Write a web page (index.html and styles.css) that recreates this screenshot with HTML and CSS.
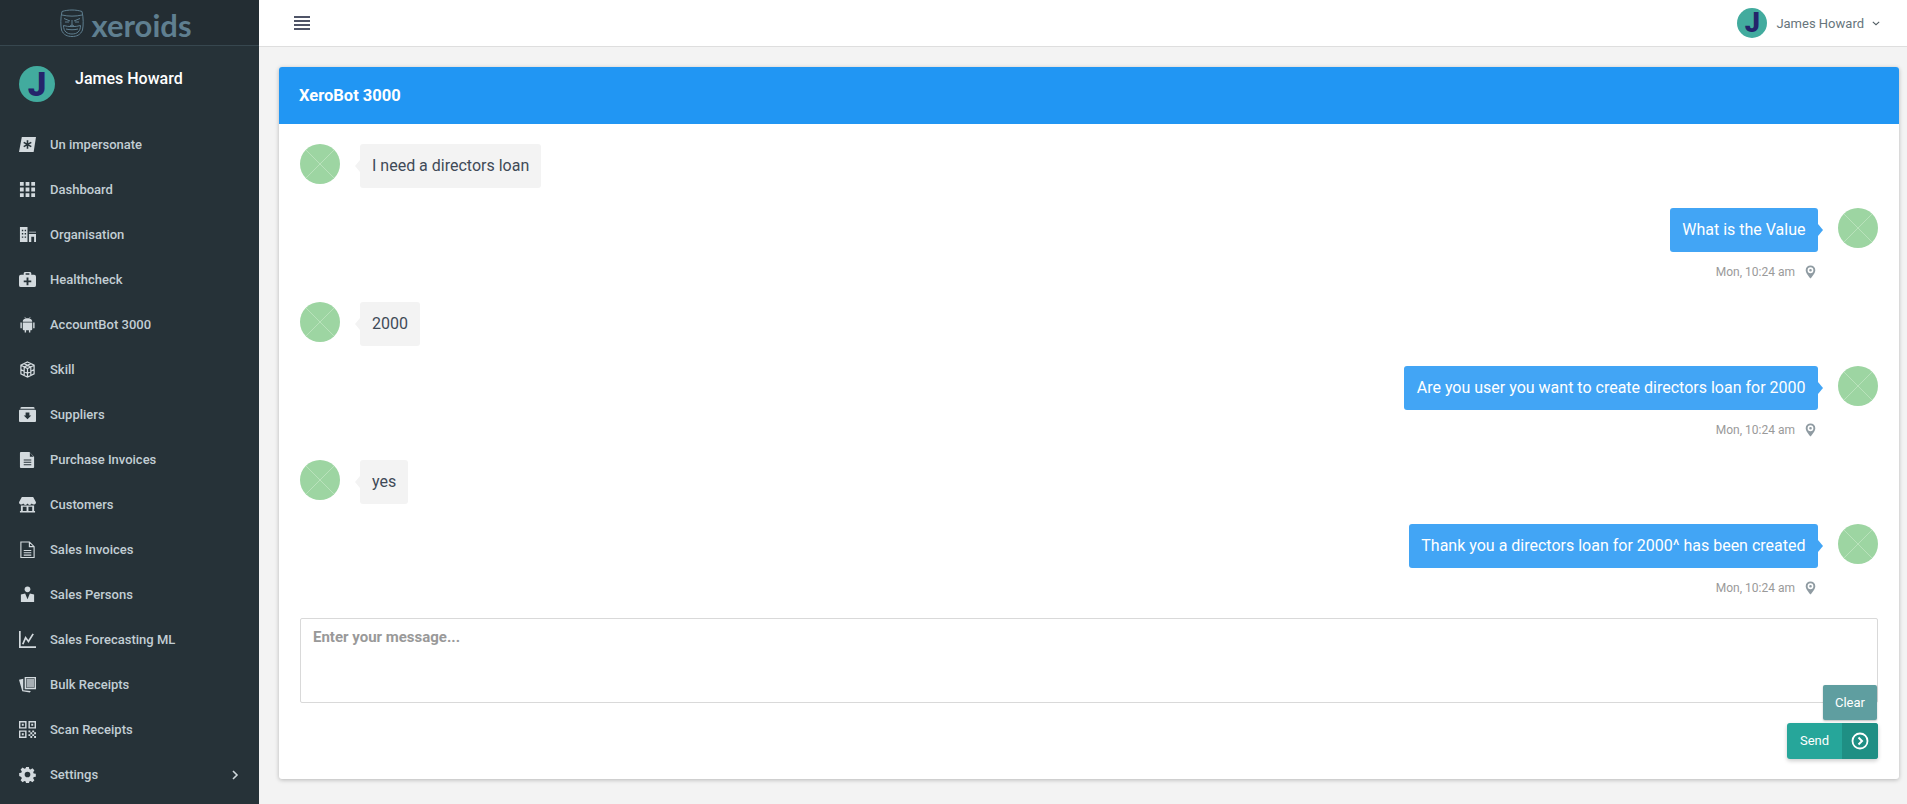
FILE: index.html
```html
<!DOCTYPE html>
<html lang="en">
<head>
<meta charset="utf-8">
<title>XeroBot 3000</title>
<link rel="stylesheet" href="styles.css">
</head>
<body>
<div class="app">
  <aside class="sidebar">
    <div class="brand">
      <svg class="brand-mask" viewBox="0 0 24 28" fill="none" stroke="#5f7f90" stroke-width="1">
        <path d="M2 2.500c6-2 14-2 20 0 1.500 6 1.500 14 .5 18.500-2 5-6 6.500-10.500 6.500S3.500 26 1.500 21C.5 16.500.5 8.500 2 2.500z"/>
        <path d="M2 6c6 1.500 14 1.500 20 0M4 9.500l6 2.500M20 9.500l-6 2.500M5 13h4M15 13h4M12 11v5l-2 1M12 16l2 1M3.500 16.500c5 1.500 12 1.500 17 0 0 6-3.500 8.500-8.500 8.500s-8.500-2.500-8.500-8.500zM6 20c4 1 8 1 12 0"/>
      </svg>
      <span class="brand-name">xeroids</span>
    </div>
    <div class="profile">
      <div class="avatar-j big"><span>J</span></div>
      <div class="profile-name">James Howard</div>
    </div>
    <nav class="menu">
      <a class="item"><svg class="ic" viewBox="0 0 18 18"><path d="M3 1h15l-2.500 16H0z"/><path d="M9 4.500v9M5 6.700l8 4.600M13 6.700l-8 4.600" stroke="#263238" stroke-width="1.700" fill="none"/></svg><span>Un impersonate</span></a>
      <a class="item"><svg class="ic" viewBox="0 0 18 18"><path d="M1 1h4v4H1zM7 1h4v4H7zM13 1h4v4h-4zM1 7h4v4H1zM7 7h4v4H7zM13 7h4v4h-4zM1 13h4v4H1zM7 13h4v4H7zM13 13h4v4h-4z"/></svg><span>Dashboard</span></a>
      <a class="item"><svg class="ic" viewBox="0 0 18 18"><path fill-rule="evenodd" d="M1 1h8v16H1zM3 4v1.500h1.500V4zM6 4v1.500h1.500V4zM3 7.500V9h1.500V7.500zM6 7.500V9h1.500V7.500zM3 11v1.500h1.500V11zM6 11v1.500h1.500V11z"/><path fill-rule="evenodd" d="M10.500 6H18v1h-7.500zM10.500 8.500H18V17h-2v-5.500h-3V17h-2.500z"/></svg><span>Organisation</span></a>
      <a class="item"><svg class="ic" viewBox="0 0 18 18"><path fill-rule="evenodd" d="M6 1h6l1 1v2h3a2 2 0 0 1 2 2v9a2 2 0 0 1-2 2H2a2 2 0 0 1-2-2V6a2 2 0 0 1 2-2h3V2zM7 2.500V4h4V2.500zM8 7v3H5v2h3v3h2v-3h3v-2h-3V7z"/></svg><span>Healthcheck</span></a>
      <a class="item"><svg class="ic" viewBox="0 0 18 18"><path d="M4 7h10v7a1 1 0 0 1-1 1h-1v2.500h-1.500V15h-3v2.500H6V15H5a1 1 0 0 1-1-1zM1.500 7H3v6H1.500zM15 7h1.500v6H15zM4 6.200C4 3.500 6.500 2.500 9 2.500s5 1 5 3.700z"/><path d="M6 1l1.500 2M12 1l-1.500 2" stroke="#cfd8dc" stroke-width=".7"/></svg><span>AccountBot 3000</span></a>
      <a class="item"><svg class="ic line heavy" viewBox="0 0 18 18"><path d="M9 1l7 3.500v9L9 17l-7-3.500v-9zM2 4.500L9 8l7-3.500M9 8v9M5.500 2.800l7 3.500M12.500 2.800l-7 3.500M2 9l7 4 7-4M5.500 6.300v9M12.500 6.300v9"/></svg><span>Skill</span></a>
      <a class="item"><svg class="ic" viewBox="0 0 18 18"><path fill-rule="evenodd" d="M3 1h12a1.500 1.500 0 0 1 1.500 1.500V3H1.500v-.5A1.500 1.500 0 0 1 3 1zM1 4h16a1 1 0 0 1 1 1v11a1 1 0 0 1-1 1H1a1 1 0 0 1-1-1V5a1 1 0 0 1 1-1zM7 7v3H5l4 4 4-4h-2V7z"/></svg><span>Suppliers</span></a>
      <a class="item"><svg class="ic" viewBox="0 0 18 18"><path fill-rule="evenodd" d="M2 1h9l5 5v11a1 1 0 0 1-1 1H2a1 1 0 0 1-1-1V2a1 1 0 0 1 1-1zM11.500 1.800V6h4zM5 9v1h8V9zM5 11.500v1h8v-1zM5 14v1h8v-1z"/></svg><span>Purchase Invoices</span></a>
      <a class="item"><svg class="ic" viewBox="0 0 18 18"><path d="M3 1h12l3 5.500A2.500 2.500 0 0 1 13.500 8 2.500 2.500 0 0 1 9 8a2.500 2.500 0 0 1-4.500 0A2.500 2.500 0 0 1 0 6.500z"/><path fill-rule="evenodd" d="M2 10h14v6h1v1.500H1V16h1zM4 11.500V16h4v-4.500zM10 11.500V16h4v-4.500z" /></svg><span>Customers</span></a>
      <a class="item"><svg class="ic line" viewBox="0 0 18 18"><path d="M2 1h9l5 5v11.500H2zM11 1v5h5M5 10h8M5 12.500h8M5 15h8"/></svg><span>Sales Invoices</span></a>
      <a class="item"><svg class="ic" viewBox="0 0 18 18"><circle cx="9" cy="3.500" r="3"/><path d="M6.500 8L9 14l2.500-6 4.500 1v8H2V9z"/></svg><span>Sales Persons</span></a>
      <a class="item"><svg class="ic line" viewBox="0 0 18 18"><path d="M.9 0v17.100H18M4 14l3-7 3 4 5-8" stroke-width="1.800"/></svg><span>Sales Forecasting ML</span></a>
      <a class="item"><svg class="ic" viewBox="0 0 18 18"><path fill-rule="evenodd" d="M6 1h12v13H6zM7.500 2.500v10h9v-10z"/><path d="M8 3h8v9H8z" opacity=".75"/><path d="M4.500 3v12l8 1-1 1.500-8-1.300L0 4z"/></svg><span>Bulk Receipts</span></a>
      <a class="item"><svg class="ic" viewBox="0 0 18 18"><path fill-rule="evenodd" d="M0 0h8v8H0zM1.500 1.500v5h5v-5zM10 0h8v8h-8zM11.500 1.500v5h5v-5zM0 10h8v8H0zM1.500 11.500v5h5v-5zM3 3h2v2H3zM13 3h2v2h-2zM3 13h2v2H3z"/><path d="M10 10h2v2h-2zM14 10h2v2h-2zM12 12h2v2h-2zM16 12h2v2h-2zM10 14h2v2h-2zM14 14h2v2h-2zM12 16h2v2h-2zM16 16h2v2h-2z"/></svg><span>Scan Receipts</span></a>
      <a class="item has-sub"><svg class="ic" viewBox="0 0 18 18"><path fill-rule="evenodd" d="M7.500 1h3l.4 2.200 1.400.6 1.900-1.300 2.100 2.100-1.300 1.900.6 1.400 2.200.4v3l-2.200.4-.6 1.400 1.300 1.900-2.100 2.100-1.900-1.300-1.400.6-.4 2.200h-3l-.4-2.200-1.400-.6-1.900 1.300-2.100-2.100 1.300-1.900-.6-1.400L.2 10.500v-3l2.200-.4.600-1.400-1.300-1.900 2.100-2.100 1.900 1.300 1.400-.6zM9 6a3 3 0 1 0 0 6 3 3 0 0 0 0-6z"/></svg><span>Settings</span><svg class="chev" viewBox="0 0 8 12"><path d="M2 2l4 4-4 4" fill="none" stroke="#cfd8dc" stroke-width="1.600"/></svg></a>
    </nav>
  </aside>
  <div class="main">
    <header class="topbar">
      <div class="burger"><i></i><i></i><i></i><i></i></div>
      <div class="user">
        <div class="avatar-j small"><span>J</span></div>
        <span class="user-name">James Howard</span>
        <svg class="user-chev" viewBox="0 0 10 6"><path d="M1 1l4 3.500L9 1" fill="none" stroke="#4f5b62" stroke-width="1.300"/></svg>
      </div>
    </header>
    <main class="content">
      <section class="card">
        <h1 class="card-head">XeroBot 3000</h1>
        <div class="card-body">
          <div class="msg left"><div class="thumb"></div><div class="bubble">I need a directors loan</div></div>
          <div class="msg right"><div class="col"><div class="bubble">What is the Value</div><div class="meta">Mon, 10:24 am<svg class="pin" viewBox="0 0 12 16"><path fill-rule="evenodd" d="M6 .5a5.500 5.500 0 0 1 5.500 5.500C11.500 9.700 6 15.500 6 15.500S.5 9.700.5 6A5.500 5.500 0 0 1 6 .5zm0 2.200a3.300 3.300 0 1 0 0 6.600 3.300 3.300 0 0 0 0-6.600zM6 4.500A1.500 1.500 0 1 1 6 7.500 1.500 1.500 0 0 1 6 4.500z"/></svg></div></div><div class="thumb"></div></div>
          <div class="msg left"><div class="thumb"></div><div class="bubble">2000</div></div>
          <div class="msg right"><div class="col"><div class="bubble">Are you user you want to create directors loan for 2000</div><div class="meta">Mon, 10:24 am<svg class="pin" viewBox="0 0 12 16"><path fill-rule="evenodd" d="M6 .5a5.500 5.500 0 0 1 5.500 5.500C11.500 9.700 6 15.500 6 15.500S.5 9.700.5 6A5.500 5.500 0 0 1 6 .5zm0 2.200a3.300 3.300 0 1 0 0 6.600 3.300 3.300 0 0 0 0-6.600zM6 4.500A1.500 1.500 0 1 1 6 7.500 1.500 1.500 0 0 1 6 4.500z"/></svg></div></div><div class="thumb"></div></div>
          <div class="msg left"><div class="thumb"></div><div class="bubble">yes</div></div>
          <div class="msg right"><div class="col"><div class="bubble">Thank you a directors loan for 2000^ has been created</div><div class="meta">Mon, 10:24 am<svg class="pin" viewBox="0 0 12 16"><path fill-rule="evenodd" d="M6 .5a5.500 5.500 0 0 1 5.500 5.500C11.500 9.700 6 15.500 6 15.500S.5 9.700.5 6A5.500 5.500 0 0 1 6 .5zm0 2.200a3.300 3.300 0 1 0 0 6.600 3.300 3.300 0 0 0 0-6.600zM6 4.500A1.500 1.500 0 1 1 6 7.500 1.500 1.500 0 0 1 6 4.500z"/></svg></div></div><div class="thumb"></div></div>
          <div class="composer">
            <textarea class="input" placeholder="Enter your message..."></textarea>
            <button class="clear">Clear</button>
          </div>
          <div class="actions">
            <button class="send"><span class="send-label">Send</span><span class="send-icon"><svg viewBox="0 0 18 18"><circle cx="9" cy="9" r="7.500" fill="none" stroke="#fff" stroke-width="1.800"/><path d="M7.500 5.500L11 9l-3.500 3.500" fill="none" stroke="#fff" stroke-width="2"/></svg></span></button>
          </div>
        </div>
      </section>
    </main>
  </div>
</div>
</body>
</html>
```
FILE: styles.css
```css
* { box-sizing: border-box; }
html, body { margin: 0; height: 804px; overflow: hidden; }
body { font-family: Roboto, "Liberation Sans", sans-serif; font-size: 14px; color: #455a64; background: #f3f3f3; }
.app { display: flex; height: 804px; }
.sidebar { width: 259px; flex: none; background: #263238; display: flex; flex-direction: column; }
.brand { height: 46px; border-bottom: 1px solid #37474f; display: flex; align-items: center; justify-content: center; gap: 7px; background: #232d33; padding-right: 7px; }
.brand-mask { width: 24px; height: 28px; }
.brand-name { font-family: Lato, "Open Sans", sans-serif; font-size: 31px; font-weight: 700; color: #5f7f90; line-height: 46px; margin-top: 5px; }
.profile { display: flex; height: 66px; padding: 20px 0 0 19px; gap: 20px; }
.avatar-j { border-radius: 50%; background: #42ab9e; color: #24246b; display: flex; align-items: center; justify-content: center; font-family: Roboto, sans-serif; font-weight: 900; flex: none; }
.avatar-j.big { width: 36px; height: 36px; font-size: 33px; }
.avatar-j.small { width: 30px; height: 30px; font-size: 27px; }
.profile-name { color: #fff; font-size: 16px; font-weight: 500; line-height: 18px; padding-top: 4px; }
.menu { display: flex; flex-direction: column; padding-top: 10px; }
.item { height: 45px; display: flex; align-items: center; padding-left: 19px; color: #c2ced4; font-size: 13px; font-weight: 500; }
.item span { margin-left: 14px; }
.ic { width: 17px; height: 17px; flex: none; fill: #d3dade; }
.ic.line { fill: none; stroke: #d3dade; stroke-width: 1.200; }
.ic.heavy { stroke-width: 1.300; }
.chev { width: 8px; height: 12px; margin-left: auto; margin-right: 20px; }
.main { flex: 1; min-width: 0; display: flex; flex-direction: column; }
.topbar { height: 47px; background: #fff; border-bottom: 1px solid #dedede; display: flex; align-items: center; justify-content: space-between; padding: 0 27px 0 35px; flex: none; }
.burger { width: 16px; display: flex; flex-direction: column; gap: 2px; }
.burger i { display: block; height: 2px; background: #4f5467; }
.user { display: flex; align-items: center; }
.user-name { font-size: 13px; color: #67757c; margin-left: 9px; }
.user-chev { width: 8px; height: 5px; margin-left: 8px; }
.content { flex: 1; padding: 20px 8px 0 20px; }
.card { background: #fff; border-radius: 3px; box-shadow: 0 1px 4px rgba(0,0,0,.25); height: 712px; }
.card-head { margin: 0; height: 57px; background: #2196f3; border-radius: 3px 3px 0 0; color: #fff; font-size: 16.500px; font-weight: 700; line-height: 57px; padding-left: 20px; }
.card-body { padding: 20px 21px 0; }
.msg { display: flex; margin-bottom: 20px; }
.msg.right { justify-content: flex-end; margin-bottom: 20px; }
.thumb { width: 40px; height: 40px; flex: none; border-radius: 50%; background-color: #9dd5a2; background-image: linear-gradient(45deg, transparent calc(50% - .5px), #b9e2bb calc(50% - .5px), #b9e2bb calc(50% + .5px), transparent calc(50% + .5px)), linear-gradient(-45deg, transparent calc(50% - .5px), #b9e2bb calc(50% - .5px), #b9e2bb calc(50% + .5px), transparent calc(50% + .5px)); }
.bubble { position: relative; height: 44px; line-height: 44px; padding: 0 12px; font-size: 16px; border-radius: 3px; background: #f3f3f3; color: #3f4a57; margin-left: 20px; width: fit-content; }
.bubble::before { content: ""; position: absolute; left: -5px; top: 16px; width: 0; height: 0; border: 6px solid transparent; border-left-width: 0; border-right: 5px solid #f3f3f3; }
.right .bubble { background: #42a5f5; color: #fff; margin-left: 0; margin-right: 20px; padding: 0 12.500px; }
.right .bubble::before { left: auto; right: -5px; border-right-width: 0; border-left: 5px solid #42a5f5; }
.col { display: flex; flex-direction: column; align-items: flex-end; }
.meta { height: 30px; display: flex; align-items: center; font-size: 12px; margin-right: 20px; padding-top: 10px; color: #9a9a9a; }
.pin { width: 11px; height: 14px; margin-left: 10px; margin-right: 2px; fill: #8f9ba2; }
.input { display: block; width: 100%; height: 85px; border: 1px solid #d9d9d9; border-radius: 2px; padding: 9px 12px; font: 500 15px Roboto, sans-serif; resize: none; outline: none; background: #fff; }
.input::placeholder { color: #999; font-weight: 700; opacity: 1; }
.composer { position: relative; }
.clear { position: absolute; right: 1px; bottom: -17px; width: 54px; height: 35px; border: 0; border-radius: 2px; background: #5f9ea0; color: #fff; font: 400 13px Roboto, sans-serif; box-shadow: 0 1px 2px rgba(0,0,0,.25); padding: 0; }
.actions { display: flex; justify-content: flex-end; margin-top: 20px; }
.send { display: flex; width: 91px; height: 36px; border: 0; padding: 0; border-radius: 3px; overflow: hidden; background: #26a69a; color: #fff; font: 400 13px Roboto, sans-serif; box-shadow: 0 2px 4px rgba(0,0,0,.2); }
.send-label { flex: 1; line-height: 36px; text-align: center; }
.send-icon { width: 36px; height: 36px; background: #1f8f84; display: flex; align-items: center; justify-content: center; }
.send-icon svg { width: 18px; height: 18px; }
```
